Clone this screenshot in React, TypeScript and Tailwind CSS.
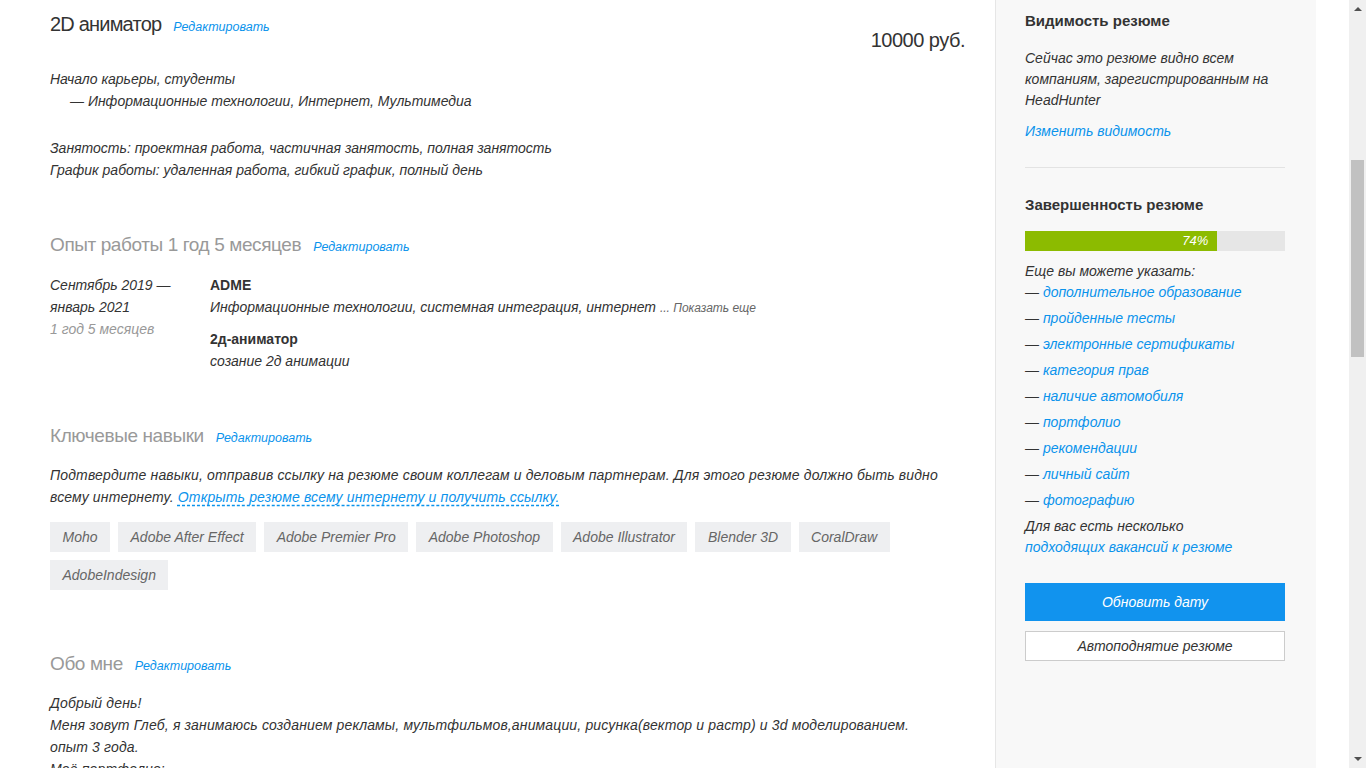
import { ReactNode } from "react"

const skills = [
  "Moho",
  "Adobe After Effect",
  "Adobe Premier Pro",
  "Adobe Photoshop",
  "Adobe Illustrator",
  "Blender 3D",
  "CoralDraw",
  "AdobeIndesign",
]

const canAdd = [
  "дополнительное образование",
  "пройденные тесты",
  "электронные сертификаты",
  "категория прав",
  "наличие автомобиля",
  "портфолио",
  "рекомендации",
  "личный сайт",
  "фотографию",
]

function EditLink() {
  return (
    <a href="#" className="ml-3 text-[12.5px] italic text-[#0a93ec]">
      Редактировать
    </a>
  )
}

function SectionTitle({ children }: { children: ReactNode }) {
  return (
    <div className="flex items-baseline">
      <h2 className="text-[19px] leading-6 tracking-[-0.4px] text-[#999]">{children}</h2>
      <EditLink />
    </div>
  )
}

function Scrollbar() {
  return (
    <div className="flex w-[17px] shrink-0 flex-col items-center bg-[#f0f0f0]">
      <div className="mt-[7px] h-0 w-0 border-x-[4px] border-b-[4px] border-x-transparent border-b-[#505050]" />
      <div className="mt-[149px] h-[197px] w-[13px] bg-[#c1c1c1]" />
      <div className="mt-auto mb-[7px] h-0 w-0 border-x-[4px] border-t-[4px] border-x-transparent border-t-[#505050]" />
    </div>
  )
}

export default function App() {
  return (
    <div
      className="flex h-[768px] overflow-hidden bg-white text-[14px] text-[#333]"
      style={{ fontFamily: '"Liberation Sans", Arial, sans-serif' }}
    >
      {/* Main column */}
      <main className="w-[995px] shrink-0 pl-[50px] pr-[30px] italic">
        <div className="flex items-start justify-between pt-[12px]">
          <div className="flex items-baseline">
            <h1 className="text-[20px] not-italic leading-6 tracking-[-0.8px] text-[#333]">2D аниматор</h1>
            <EditLink />
          </div>
          <div className="mt-[16px] text-[20px] not-italic leading-6 tracking-[-0.5px] text-[#333]">10000 руб.</div>
        </div>

        <div className="mt-[16px] leading-[22px]">
          <p>Начало карьеры, студенты</p>
          <p className="pl-5">— Информационные технологии, Интернет, Мультимедиа</p>
        </div>

        <div className="mt-[25px] leading-[22px]">
          <p>Занятость: проектная работа, частичная занятость, полная занятость</p>
          <p>График работы: удаленная работа, гибкий график, полный день</p>
        </div>

        {/* Experience */}
        <section className="mt-[52px] not-italic">
          <SectionTitle>Опыт работы 1 год 5 месяцев</SectionTitle>
          <div className="mt-[17px] flex leading-[22px]">
            <div className="w-[160px] shrink-0 italic">
              <p>Сентябрь 2019 —</p>
              <p>январь 2021</p>
              <p className="text-[#999]">1 год 5 месяцев</p>
            </div>
            <div>
              <p className="font-bold">ADME</p>
              <p className="italic">
                Информационные технологии, системная интеграция, интернет{" "}
                <span className="text-[12px] text-[#666]">... Показать еще</span>
              </p>
              <p className="mt-[9px] font-bold">2д-аниматор</p>
              <p className="italic">созание 2д анимации</p>
            </div>
          </div>
        </section>

        {/* Skills */}
        <section className="mt-[52px] not-italic">
          <SectionTitle>Ключевые навыки</SectionTitle>
          <p className="mt-[16px] max-w-[900px] italic leading-[22px] tracking-[0.15px]">
            Подтвердите навыки, отправив ссылку на резюме своим коллегам и деловым партнерам. Для этого резюме должно быть видно
            всему интернету.{" "}
            <a href="#" className="text-[#0a93ec] underline decoration-dashed underline-offset-[3px]">
              Открыть резюме всему интернету и получить ссылку.
            </a>
          </p>
          <div className="mt-[14px] flex flex-wrap gap-x-2 gap-y-2">
            {skills.map((s) => (
              <span key={s} className="h-[30px] bg-[#eeeff1] px-[12.5px] text-[14px] italic leading-[30px] text-[#666]">
                {s}
              </span>
            ))}
          </div>
        </section>

        {/* About */}
        <section className="mt-[62px] not-italic">
          <SectionTitle>Обо мне</SectionTitle>
          <div className="mt-[16px] italic leading-[22px] tracking-[0.15px]">
            <p>Добрый день!</p>
            <p>Меня зовут Глеб, я занимаюсь созданием рекламы, мультфильмов,анимации, рисунка(вектор и растр) и 3d моделированием.</p>
            <p>опыт 3 года.</p>
            <p>Моё портфолио:</p>
          </div>
        </section>
      </main>

      {/* Sidebar */}
      <aside className="w-[321px] shrink-0 border-l border-[#e6e6e6] bg-[#f8f8f8] pl-[29px] pr-[31px]">
        <h3 className="pt-[11px] text-[15px] font-bold leading-5">Видимость резюме</h3>
        <p className="mt-[17px] italic leading-[21px]">
          Сейчас это резюме видно всем компаниям, зарегистрированным на HeadHunter
        </p>
        <a href="#" className="mt-[10px] block italic leading-[21px] text-[#0a93ec]">
          Изменить видимость
        </a>
        <div className="mt-[25px] border-t border-[#e3e3e3]" />

        <h3 className="mt-[27px] text-[15px] font-bold leading-5">Завершенность резюме</h3>
        <div className="mt-[16px] h-5 bg-[#e6e6e6]">
          <div className="flex h-5 w-[74%] items-center justify-end bg-[#8cbb00] pr-[9px] text-[13px] italic text-white">
            74%
          </div>
        </div>
        <p className="mt-[10px] italic leading-[21px]">Еще вы можете указать:</p>
        <ul className="italic">
          {canAdd.map((item) => (
            <li key={item} className="h-[26px] leading-[21px]">
              —{" "}
              <a href="#" className="text-[#0a93ec]">
                {item}
              </a>
            </li>
          ))}
        </ul>
        <p className="italic leading-[21px]">Для вас есть несколько</p>
        <a href="#" className="block italic leading-[21px] text-[#0a93ec]">
          подходящих вакансий к резюме
        </a>
        <button className="mt-[25px] block h-[38px] w-full bg-[#1193ee] text-[14px] italic text-white">
          Обновить дату
        </button>
        <button className="mt-[10px] block h-[30px] w-full border border-[#ccc] bg-white text-[14px] italic text-[#333]">
          Автоподнятие резюме
        </button>
      </aside>

      <div className="w-[33px] shrink-0 bg-white" />
      <Scrollbar />
    </div>
  )
}
